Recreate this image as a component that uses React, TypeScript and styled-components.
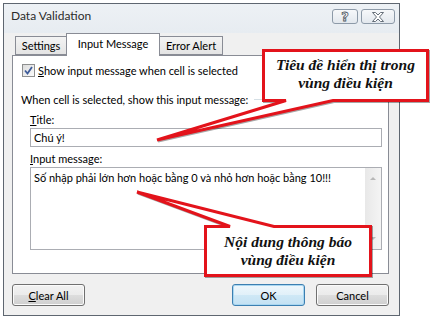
import React from 'react';
import styled, { createGlobalStyle } from 'styled-components';

const GlobalStyle = createGlobalStyle`
  html, body {
    margin: 0;
    padding: 0;
    background: #ffffff;
  }
`;

const uiFont = 'Lato, "Noto Sans", sans-serif';

const Page = styled.div({
  background: '#ffffff',
  height: 320,
  overflow: 'hidden',
  position: 'relative',
  width: 431,
});

const Dialog = styled.div({
  background: '#f0f0f0',
  border: '1px solid #5e6670',
  boxSizing: 'border-box',
  color: '#000000',
  display: 'flex',
  flexDirection: 'column',
  fontFamily: uiFont,
  fontSize: 11,
  height: 313,
  marginLeft: 3,
  marginTop: 3,
  width: 397,
});

const TitleBar = styled.div({
  alignItems: 'flex-start',
  background: 'linear-gradient(#edf1f5, #e7ecf1)',
  display: 'flex',
  height: 29,
  paddingLeft: 7,
  paddingRight: 4,
});

const Caption = styled.div({
  color: '#2b2b2b',
  flex: 1,
  fontSize: 12,
  lineHeight: '15px',
  marginTop: 4,
});

const CaptionButton = styled.div<{ $w: number }>((p) => ({
  alignItems: 'center',
  background: 'linear-gradient(#f6f8fa, #e3e8ee)',
  border: '1px solid #8d9aa8',
  borderRadius: 3,
  boxSizing: 'border-box',
  display: 'flex',
  height: 15,
  justifyContent: 'center',
  marginLeft: 3,
  marginTop: 5,
  width: p.$w,
}));

const HelpGlyph = styled.span({
  WebkitTextStroke: '0.8px #4d5660',
  color: '#ffffff',
  fontFamily: '"DejaVu Sans", sans-serif',
  fontSize: 13,
  fontWeight: 700,
  lineHeight: '13px',
});

const Body = styled.div({
  display: 'flex',
  flexDirection: 'column',
  padding: '0 10px 0 8px',
});

const TabRow = styled.div({
  alignItems: 'flex-end',
  display: 'flex',
  height: 22,
  paddingLeft: 3,
  position: 'relative',
  zIndex: 1,
});

const Tab = styled.div<{ $active?: boolean; $w: number; $side: 'left' | 'right' | 'both' }>((p) => ({
  alignItems: 'center',
  background: p.$active ? '#ffffff' : 'linear-gradient(#f3f3f3, #e4e4e4)',
  borderColor: '#898c95',
  borderStyle: 'solid',
  borderWidth: p.$active
    ? '1px 1px 0 1px'
    : p.$side === 'left'
      ? '1px 0 1px 1px'
      : '1px 1px 1px 0',
  boxSizing: 'border-box',
  display: 'flex',
  height: p.$active ? 23 : 19,
  justifyContent: 'center',
  marginBottom: p.$active ? -1 : 0,
  paddingBottom: p.$active ? 3 : 0,
  width: p.$w,
}));

const Panel = styled.div({
  background: '#ffffff',
  border: '1px solid #898c95',
  boxSizing: 'border-box',
  display: 'flex',
  flexDirection: 'column',
  height: 219,
  padding: '8px 0 0 8px',
});

const CheckRow = styled.div({
  alignItems: 'center',
  display: 'flex',
  gap: 3,
  height: 13,
  marginLeft: 1,
});

const CheckBox = styled.div({
  alignItems: 'center',
  background: 'linear-gradient(135deg, #dcdcdc, #fbfbfb)',
  border: '1px solid #8e8f8f',
  boxSizing: 'border-box',
  display: 'flex',
  height: 13,
  justifyContent: 'center',
  width: 13,
});

const Line = styled.div({
  height: 15,
  lineHeight: '15px',
  whiteSpace: 'nowrap',
});

const GroupRow = styled.div({
  alignItems: 'center',
  display: 'flex',
  gap: 6,
  height: 15,
  marginTop: 15,
  paddingRight: 6,
});

const GroupRule = styled.div({
  borderTop: '1px solid #d5dfe5',
  flex: 1,
});

const Field = styled.div({
  display: 'flex',
  flexDirection: 'column',
  marginLeft: 9,
  width: 352,
});

const Label = styled(Line)<{ $top: number }>((p) => ({
  marginTop: p.$top,
}));

const TextBox = styled.div({
  border: '1px solid #abadb3',
  boxSizing: 'border-box',
  height: 19,
  lineHeight: '17px',
  marginTop: 1,
  paddingLeft: 3,
});

const TextArea = styled.div({
  border: '1px solid #abadb3',
  boxSizing: 'border-box',
  display: 'flex',
  height: 83,
  marginTop: 1,
});

const AreaText = styled.div({
  flex: 1,
  lineHeight: '15px',
  padding: '2px 0 0 3px',
  whiteSpace: 'nowrap',
});

const ScrollBar = styled.div({
  alignItems: 'center',
  background: 'linear-gradient(90deg, #e8e8e8, #f4f4f4)',
  display: 'flex',
  flexDirection: 'column',
  justifyContent: 'space-between',
  padding: '9px 0 9px',
  width: 16,
});

const Arrow = styled.div<{ $up?: boolean }>((p) => ({
  borderLeft: '3px solid transparent',
  borderRight: '3px solid transparent',
  ...(p.$up ? { borderBottom: '3px solid #b8b8b8' } : { borderTop: '3px solid #b8b8b8' }),
  height: 0,
  width: 0,
}));

const ButtonRow = styled.div({
  display: 'flex',
  gap: 11,
  marginTop: 10,
});

const Button = styled.div<{ $primary?: boolean }>((p) => ({
  alignItems: 'center',
  background: p.$primary
    ? 'linear-gradient(#eef7fc 0%, #e1f0f9 50%, #cfe8f6 51%, #c3e1f3 100%)'
    : 'linear-gradient(#f2f2f2 0%, #ebebeb 50%, #dddddd 51%, #cfcfcf 100%)',
  border: p.$primary ? '1px solid #3c7fb1' : '1px solid #707070',
  borderRadius: 3,
  boxShadow: p.$primary ? 'inset 0 0 0 1px #a9d7f1' : 'inset 0 0 0 1px #fbfbfb',
  boxSizing: 'border-box',
  display: 'flex',
  height: 22,
  justifyContent: 'center',
  width: 73,
}));

const Spacer = styled.div({
  flex: 1,
});

const Overlay = styled.svg({
  left: 0,
  pointerEvents: 'none',
  position: 'absolute',
  top: 0,
});

const CalloutText = styled.div<{ $x: number; $y: number; $w: number }>((p) => ({
  color: '#111111',
  fontFamily: '"Liberation Serif", "Times New Roman", serif',
  fontSize: 15.5,
  fontStyle: 'italic',
  fontWeight: 700,
  left: p.$x,
  lineHeight: '18px',
  position: 'absolute',
  textAlign: 'center',
  top: p.$y,
  width: p.$w,
}));

const U = styled.span({
  textDecoration: 'underline',
});

const App = () => (
  <Page>
    <GlobalStyle />
    <Dialog>
      <TitleBar>
        <Caption>Data Validation</Caption>
        <CaptionButton $w={26}>
          <HelpGlyph>?</HelpGlyph>
        </CaptionButton>
        <CaptionButton $w={34}>
          <svg width="14" height="10" viewBox="0 0 14 10">
            <path
              d="M1.5 0.5 H4.5 L7 3 L9.5 0.5 H12.5 L8.5 5 L12.5 9.5 H9.5 L7 7 L4.5 9.5 H1.5 L5.5 5 Z"
              fill="#ffffff"
              stroke="#56606b"
              strokeWidth="0.9"
            />
          </svg>
        </CaptionButton>
      </TitleBar>
      <Body>
        <TabRow>
          <Tab $w={51} $side="left">Settings</Tab>
          <Tab $w={94} $side="both" $active>Input Message</Tab>
          <Tab $w={63} $side="right">Error Alert</Tab>
        </TabRow>
        <Panel>
          <CheckRow>
            <CheckBox>
              <svg width="9" height="9" viewBox="0 0 9 9">
                <path d="M1 4.5 L3.5 7.5 L8 1" fill="none" stroke="#3d5b99" strokeWidth="1.8" />
              </svg>
            </CheckBox>
            <Line><U>S</U>how input message when cell is selected</Line>
          </CheckRow>
          <GroupRow>
            <Line>When cell is selected, show this input message:</Line>
            <GroupRule />
          </GroupRow>
          <Field>
            <Label $top={5}><U>T</U>itle:</Label>
            <TextBox>Chú ý!</TextBox>
            <Label $top={4}><U>I</U>nput message:</Label>
            <TextArea>
              <AreaText>Số nhập phải lớn hơn hoặc bằng 0 và nhỏ hơn hoặc bằng 10!!!</AreaText>
              <ScrollBar>
                <Arrow $up />
                <Arrow />
              </ScrollBar>
            </TextArea>
          </Field>
        </Panel>
        <ButtonRow>
          <Button><U>C</U>lear All</Button>
          <Spacer />
          <Button $primary>OK</Button>
          <Button>Cancel</Button>
        </ButtonRow>
      </Body>
    </Dialog>
    <Overlay width="431" height="320" viewBox="0 0 431 320">
      <g fill="#ffffff" stroke="#e3131b" strokeWidth="3" strokeLinejoin="miter" style={{ filter: 'drop-shadow(1px 1px 0.6px rgba(0,0,0,0.35))' }}>
        <path d="M263.5 50.5 H427.5 V100.5 H333 L157 140 L286 100.5 H263.5 Z" />
        <path d="M205.5 226.5 H230 L137 192 L274 226.5 H370.5 V275.5 H205.5 Z" />
      </g>
    </Overlay>
    <CalloutText $x={263} $y={56} $w={165}>
      Tiêu đề hiển thị trong
      <br />
      vùng điều kiện
    </CalloutText>
    <CalloutText $x={205} $y={233} $w={166}>
      Nội dung thông báo
      <br />
      vùng điều kiện
    </CalloutText>
  </Page>
);

export default App;
